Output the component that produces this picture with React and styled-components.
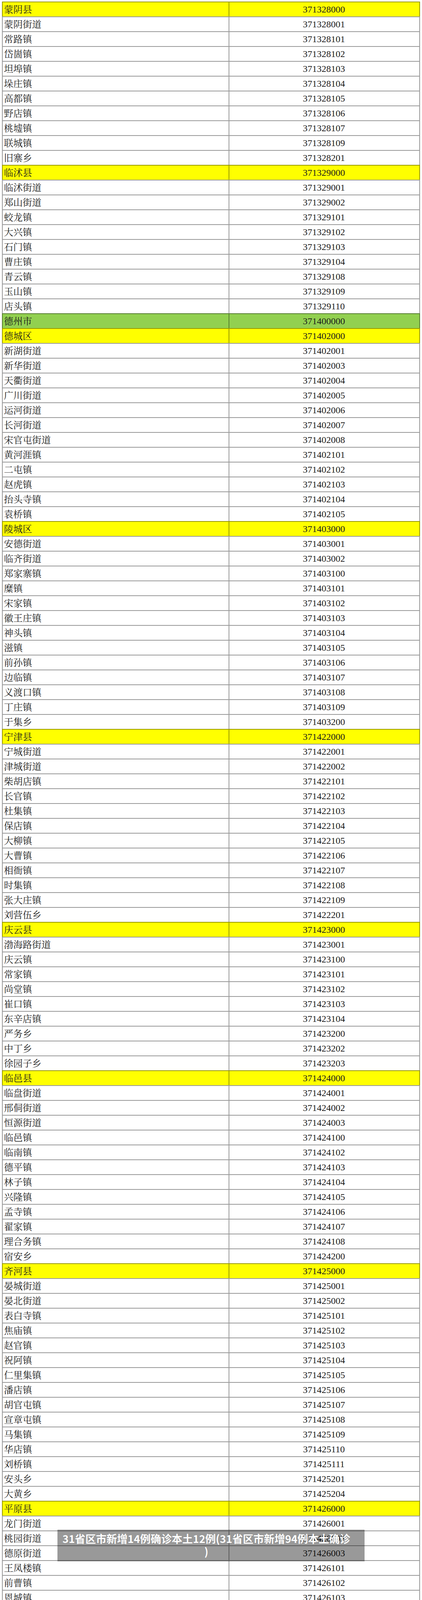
import React from "react";
import styled, { createGlobalStyle } from "styled-components";

const ROWS = `
蒙阴县 371328000
蒙阴街道 371328001
常路镇 371328101
岱崮镇 371328102
坦埠镇 371328103
垛庄镇 371328104
高都镇 371328105
野店镇 371328106
桃墟镇 371328107
联城镇 371328109
旧寨乡 371328201
临沭县 371329000
临沭街道 371329001
郑山街道 371329002
蛟龙镇 371329101
大兴镇 371329102
石门镇 371329103
曹庄镇 371329104
青云镇 371329108
玉山镇 371329109
店头镇 371329110
德州市 371400000
德城区 371402000
新湖街道 371402001
新华街道 371402003
天衢街道 371402004
广川街道 371402005
运河街道 371402006
长河街道 371402007
宋官屯街道 371402008
黄河涯镇 371402101
二屯镇 371402102
赵虎镇 371402103
抬头寺镇 371402104
袁桥镇 371402105
陵城区 371403000
安德街道 371403001
临齐街道 371403002
郑家寨镇 371403100
糜镇 371403101
宋家镇 371403102
徽王庄镇 371403103
神头镇 371403104
滋镇 371403105
前孙镇 371403106
边临镇 371403107
义渡口镇 371403108
丁庄镇 371403109
于集乡 371403200
宁津县 371422000
宁城街道 371422001
津城街道 371422002
柴胡店镇 371422101
长官镇 371422102
杜集镇 371422103
保店镇 371422104
大柳镇 371422105
大曹镇 371422106
相衙镇 371422107
时集镇 371422108
张大庄镇 371422109
刘营伍乡 371422201
庆云县 371423000
渤海路街道 371423001
庆云镇 371423100
常家镇 371423101
尚堂镇 371423102
崔口镇 371423103
东辛店镇 371423104
严务乡 371423200
中丁乡 371423202
徐园子乡 371423203
临邑县 371424000
临盘街道 371424001
邢侗街道 371424002
恒源街道 371424003
临邑镇 371424100
临南镇 371424102
德平镇 371424103
林子镇 371424104
兴隆镇 371424105
孟寺镇 371424106
翟家镇 371424107
理合务镇 371424108
宿安乡 371424200
齐河县 371425000
晏城街道 371425001
晏北街道 371425002
表白寺镇 371425101
焦庙镇 371425102
赵官镇 371425103
祝阿镇 371425104
仁里集镇 371425105
潘店镇 371425106
胡官屯镇 371425107
宣章屯镇 371425108
马集镇 371425109
华店镇 371425110
刘桥镇 371425111
安头乡 371425201
大黄乡 371425204
平原县 371426000
龙门街道 371426001
桃园街道 371426002
德原街道 371426003
王凤楼镇 371426101
前曹镇 371426102
恩城镇 371426103
王庙镇 371426104
王杲铺镇 371426105
张华镇 371426106
腰站镇 371426107
王打卦镇 371426108
三唐乡 371426202
夏津县 371427000
银城街道 371427001
北城街道 371427002
南城镇 371427100
苏留庄镇 371427101
新盛店镇 371427102
雷集镇 371427103
郑保屯镇 371427104
白马湖镇 371427105
东李官屯镇 371427106
宋楼镇 371427107
香赵庄镇 371427108
双庙镇 371427109
渡口驿乡 371427200
田庄乡 371427204
武城县 371428000
广运街道 371428001
武城镇 371428100
老城镇 371428101
郝王庄镇 371428104
鲁权屯镇 371428105
四女寺镇 371428106
甲马营镇 371428107
李家户镇 371428108
乐陵市 371481000
市中街道 371481001
胡家街道 371481002
云红街道 371481003
郭家街道 371481004
杨安镇 371481100
朱集镇 371481101
黄夹镇 371481102
丁坞镇 371481103
花园镇 371481104
郑店镇 371481105
化楼镇 371481106
孔镇镇 371481107
铁营镇 371481108
西段乡 371481200
大孙乡 371481201
寨头堡乡 371481203
禹城市 371482000
市中街道 371482001
禹兴街道 371482003
伦镇 371482100
房寺镇 371482101
张庄镇 371482102
辛店镇 371482103
安仁镇 371482104
辛寨镇 371482105
梁家镇 371482106
十里望回族镇 371482107
莒镇 371482108
聊城市 371500000
东昌府区 371502000
古楼街道 371502001
新区街道 371502002
柳园街道 371502003
湖西街道 371502004
李海务街道 371502005
闫寺街道 371502006
道口铺街道 371502008
东城街道 371502009
蒋官屯街道 371502010
北城街道 371502011
九州街道 371502012
沙镇镇 371502102
侯营镇 371502103
堂邑镇 371502104
梁水镇镇 371502105
斗虎屯镇 371502106
张炉集镇 371502108
于集镇 371502109
郑家镇 371502110
朱老庄镇 371502112
许营镇 371502113
顾官屯镇 371502114
韩集镇 371502115
广平镇 371502116
茌平区 371503000
振兴街道 371503001
信发街道 371503002
温陈街道 371503003
乐平铺镇 371503101
冯官屯镇 371503102
菜屯镇 371503103
博平镇 371503104
杜郎口镇 371503105
韩屯镇 371503106
胡屯镇 371503107
肖家庄镇 371503108
贾寨镇 371503109
洪官屯镇 371503110
杨官屯乡 371503201
`
  .trim()
  .split("\n")
  .map((line) => {
    const [name, code] = line.trim().split(/\s+/);
    return { name, code };
  });

// city codes end in 00000, county codes in 000
const levelOf = (code) => {
  if (code.endsWith("00000")) return "city";
  if (code.endsWith("000")) return "county";
  return "town";
};

const FILLS = {
  city: "#92d050",
  county: "#ffff00",
  town: "#ffffff",
};

const LINE = "rgba(0, 0, 0, 0.4)";

const GlobalStyle = createGlobalStyle`
  html, body {
    margin: 0;
    padding: 0;
    background: #ffffff;
  }
`;

const Page = styled.div`
  position: relative;
  width: 1080px;
  box-sizing: border-box;
  padding: 4px 5px 4px;
  background: #ffffff;
  font-family: "Liberation Serif", "Noto Serif CJK SC", "Noto Sans CJK SC", serif;
  color: #1c1c1c;
`;

const Sheet = styled.div`
  display: flex;
  flex-direction: column;
  border-bottom: 2px solid ${LINE};
`;

const Row = styled.div`
  display: grid;
  grid-template-columns: 580px 1fr;
  height: 38px;
  box-sizing: border-box;
  border-top: 2px solid ${LINE};
  border-left: 2px solid ${LINE};
  border-right: 2px solid ${LINE};
  background: ${({ $level }) => FILLS[$level]};
`;

const NameCell = styled.div`
  box-sizing: border-box;
  border-right: 2px solid ${LINE};
  padding: 2px 0 0 3px;
  font-size: 24px;
  line-height: 34px;
  white-space: nowrap;
`;

const CodeCell = styled.div`
  text-align: center;
  font-size: 24px;
  line-height: 36px;
  padding-right: 2px;
`;

// caption strip laid over the sheet
const Banner = styled.div`
  position: absolute;
  top: 3916px;
  left: 147px;
  width: 786px;
  height: 81px;
  box-sizing: border-box;
  padding: 6px 24px 0 0;
  background: rgba(0, 0, 0, 0.4);
  color: #ffffff;
  font-family: "Noto Sans CJK SC", "Noto Sans", sans-serif;
  font-weight: 700;
  font-size: 27px;
  line-height: 33px;
  text-align: center;
  white-space: nowrap;
  text-shadow: 0 0 1px rgba(0, 0, 0, 0.25);
`;

const App = () => {
  return (
    <Page>
      <GlobalStyle />
      <Sheet>
        {ROWS.map(({ name, code }) => (
          <Row key={code} $level={levelOf(code)}>
            <NameCell>{name}</NameCell>
            <CodeCell>{code}</CodeCell>
          </Row>
        ))}
      </Sheet>
      <Banner>
        31省区市新增14例确诊本土12例(31省区市新增94例本土确诊
        <br />)
      </Banner>
    </Page>
  );
};

export default App;
